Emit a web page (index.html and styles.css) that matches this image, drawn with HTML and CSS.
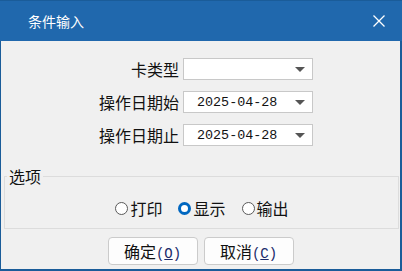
FILE: index.html
```html
<!DOCTYPE html>
<html lang="zh-CN">
<head>
    <meta charset="UTF-8">
    <meta name="viewport" content="width=device-width, initial-scale=1.0">
    <title>条件输入</title>
    <link rel="stylesheet" href="styles.css">
</head>
<body>

<div class="window">
  <div class="titlebar">
    <span class="title">条件输入</span>
    <svg class="close" width="12" height="12" viewBox="0 0 12 12">
      <path d="M0.5 0.5 L11.5 11.5 M11.5 0.5 L0.5 11.5" stroke="#fff" stroke-width="1.3" fill="none"/>
    </svg>
  </div>

  <div class="form">
    <label class="form-label">卡类型</label>
    <div class="combo"><span class="combo-text"></span><span class="arrow"></span></div>

    <label class="form-label">操作日期始</label>
    <div class="combo"><span class="combo-text">2025-04-28</span><span class="arrow"></span></div>

    <label class="form-label">操作日期止</label>
    <div class="combo"><span class="combo-text">2025-04-28</span><span class="arrow"></span></div>
  </div>

  <fieldset class="group">
    <legend class="group-title">选项</legend>
    <div class="radios">
      <div class="radio-item"><span class="radio"></span>打印</div>
      <div class="radio-item"><span class="radio checked"></span>显示</div>
      <div class="radio-item"><span class="radio"></span>输出</div>
    </div>
  </fieldset>

  <div class="buttons">
    <button class="btn">确定<span class="key">(<u>O</u>)</span></button>
    <button class="btn">取消<span class="key">(<u>C</u>)</span></button>
  </div>
</div>

</body>
</html>
```

FILE: styles.css
```css
/*CSS RESETS*/

body {
    margin: 0;
    font-family: "Noto Sans CJK SC", "Noto Sans", sans-serif;
}

/*CSS START*/

.window {
    box-sizing: border-box;
    width: 402px;
    height: 271px;
    background-color: #f0f0f0;
    border-left: 1px solid #1a5c99;
    border-right: 2px solid #1a5c99;
    border-bottom: 2px solid #1a5c99;
    display: flex;
    flex-direction: column;
}

.titlebar {
    height: 41px;
    margin: 0 -2px 0 -1px;
    background-color: #2068ad;
    display: flex;
    align-items: center;
    justify-content: space-between;
    padding: 0 17px 0 28px;
    border-top: 1px solid #1a5c99;
    box-sizing: border-box;
}

.title {
    color: #fff;
    font-size: 14px;
    line-height: 20px;
}

.close {
    display: block;
}

.form {
    display: grid;
    grid-template-columns: 178px 130px;
    column-gap: 4px;
    row-gap: 11px;
    align-items: center;
    padding-top: 17px;
}

.form-label {
    text-align: right;
    font-size: 16px;
    line-height: 22px;
    color: #111;
}

.combo {
    box-sizing: border-box;
    height: 22px;
    background-color: #fff;
    border: 1px solid #c8c8c8;
    display: flex;
    align-items: center;
    justify-content: space-between;
    padding: 0 7px 0 13px;
}

.combo-text {
    font-family: "Liberation Mono", "DejaVu Sans Mono", monospace;
    font-size: 13.4px;
    color: #111;
}

.arrow {
    width: 0;
    height: 0;
    border-left: 5px solid transparent;
    border-right: 5px solid transparent;
    border-top: 5px solid #555;
}

.group {
    margin: 20px 1px 0 3px;
    padding: 12px 0 10px 0;
    border: 1px solid #dcdcdc;
    min-width: 0;
}

.group-title {
    margin-left: 2px;
    padding: 0 2px;
    font-size: 16px;
    line-height: 20px;
    color: #111;
}

.radios {
    display: flex;
    justify-content: center;
    gap: 16px;
    font-size: 16px;
    line-height: 20px;
    color: #111;
    padding-left: 1px;
}

.radio-item {
    display: flex;
    align-items: center;
    gap: 2px;
}

.radio {
    box-sizing: border-box;
    width: 13px;
    height: 13px;
    border-radius: 50%;
    border: 1px solid #5a5a5a;
    background-color: #fff;
}

.radio.checked {
    border: 3.5px solid #0067c0;
    background-color: #fff;
}

.buttons {
    display: flex;
    justify-content: center;
    gap: 6px;
    margin-top: 8px;
}

.btn {
    box-sizing: border-box;
    width: 90px;
    height: 28px;
    background-color: #fdfdfd;
    border: 1px solid #cbcbcb;
    border-radius: 4px;
    font-family: "Noto Sans CJK SC", "Noto Sans", sans-serif;
    font-size: 16px;
    color: #111;
    padding: 0;
}

.key {
    font-family: "Liberation Mono", monospace;
    font-size: 14px;
    color: #1a2a6a;
}
```
